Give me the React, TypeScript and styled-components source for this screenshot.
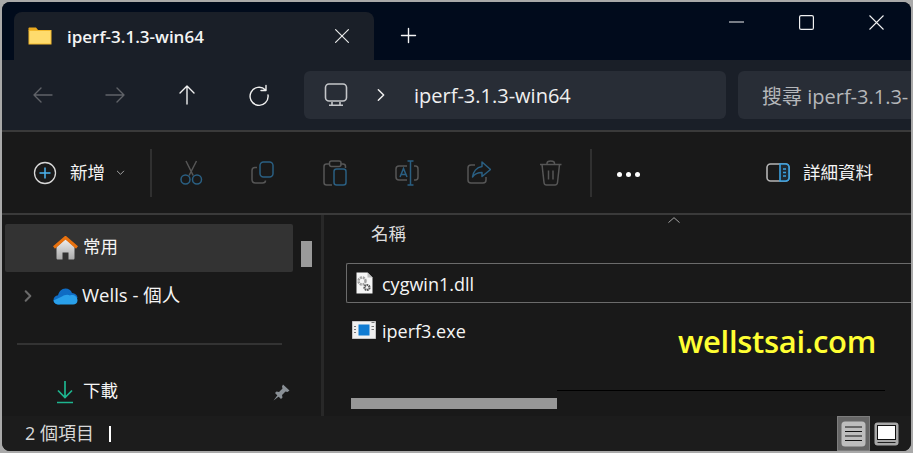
import React from "react";
import styled, { createGlobalStyle } from "styled-components";

const GlobalStyle = createGlobalStyle`
  html, body { margin: 0; padding: 0; background: #ffffff; }
  body { font-family: "Open Sans", "Noto Sans CJK TC", sans-serif; }
  * { box-sizing: border-box; }
`;

const Frame = styled.div`
  width: 913px;
  height: 453px;
  background: #a9a9a9;
  padding: 2px;
  overflow: hidden;
`;

const Win = styled.div`
  position: relative;
  width: 909px;
  height: 449px;
  border-radius: 8px;
  overflow: hidden;
  display: flex;
  flex-direction: column;
  background: #191919;
  color: #fff;
`;

const TitleBar = styled.div`
  height: 58px;
  flex: none;
  background: #010b1c;
  display: flex;
  align-items: flex-end;
  padding-left: 12px;
`;

const Tab = styled.div`
  width: 360px;
  height: 48px;
  background: #1a1f28;
  border-radius: 8px 8px 0 0;
  display: flex;
  align-items: center;
  padding: 0 0 0 14px;
  flex: none;
`;

const TabTitle = styled.span`
  margin-left: 15px;
  font-size: 17px;
  font-weight: 600;
  color: #f4f4f4;
  flex: 1;
`;

const TabClose = styled.span`
  display: flex;
  margin-right: 21px;
`;

const NewTab = styled.span`
  display: flex;
  margin: 0 0 14px 24px;
`;

const WinControls = styled.div`
  margin-left: auto;
  align-self: flex-start;
  display: flex;
  align-items: center;
  gap: 55px;
  height: 41px;
  padding: 0 27px 0 0;
`;

const NavBar = styled.div`
  height: 70px;
  flex: none;
  background: #1a1f28;
  display: flex;
  align-items: center;
  padding-left: 28px;
`;

const NavButton = styled.span<{ $off?: boolean }>`
  width: 26px;
  display: flex;
  justify-content: center;
  margin-right: 46px;
  opacity: ${(p) => (p.$off ? 0.4 : 1)};
`;

const AddressBar = styled.div`
  margin-left: -14px;
  width: 422px;
  height: 48px;
  background: #282d36;
  border-radius: 6px;
  display: flex;
  align-items: center;
  padding-left: 20px;
  flex: none;
`;

const Crumb = styled.span`
  margin-left: 25px;
  font-size: 20px;
  color: #f0f0f0;
`;

const Separator = styled.span`
  display: flex;
  margin-left: 25px;
`;

const SearchBox = styled.div`
  margin-left: 12px;
  flex: 1;
  height: 48px;
  background: #282d36;
  border-radius: 6px 0 0 6px;
  display: flex;
  align-items: center;
  padding-left: 24px;
  font-size: 20px;
  color: #b5b7ba;
  white-space: nowrap;
  overflow: hidden;
`;

const Divider = styled.div`
  height: 2px;
  flex: none;
  background: #3a3a3a;
`;

const Toolbar = styled.div`
  height: 81px;
  flex: none;
  background: #191919;
  display: flex;
  align-items: center;
  padding-left: 31px;
`;

const NewButton = styled.div`
  display: flex;
  align-items: center;
  font-size: 17.500px;
  color: #f5f5f5;
  gap: 13px;
`;

const ToolLabel = styled.span`
  padding-bottom: 2px;
`;

const NewChevron = styled.span`
  display: flex;
  margin-left: -3px;
`;

const ToolSep = styled.span<{ $left: number; $right: number }>`
  width: 2px;
  height: 48px;
  background: #303030;
  flex: none;
  margin-left: ${(p) => p.$left}px;
  margin-right: ${(p) => p.$right}px;
`;

const ToolIcon = styled.span`
  width: 24px;
  height: 26px;
  display: flex;
  align-items: center;
  justify-content: center;
  margin-right: 48px;
  flex: none;
`;

const More = styled.div`
  display: flex;
  gap: 4px;
  width: 24px;
  margin-top: 4px;
`;

const Dot = styled.span`
  width: 5px;
  height: 5px;
  border-radius: 50%;
  background: #fff;
`;

const Details = styled.div`
  margin-left: 125px;
  display: flex;
  align-items: center;
  gap: 13px;
  font-size: 17.500px;
  color: #f5f5f5;
`;

const Main = styled.div`
  flex: 1;
  min-height: 0;
  display: flex;
  background: #191919;
  position: relative;
`;

const Sidebar = styled.div`
  width: 322px;
  flex: none;
  padding: 9px 0 0 3px;
  border-right: 3px solid #282828;
  position: relative;
`;

const NavRow = styled.div<{ $selected?: boolean }>`
  width: 288px;
  height: 48px;
  display: flex;
  align-items: center;
  background: ${(p) => (p.$selected ? "#333333" : "transparent")};
  border-radius: 2px;
  font-size: 17.500px;
  color: #f5f5f5;
`;

const RowLabel = styled.span`
  padding-bottom: 6px;
`;

const WideLabel = styled(RowLabel)`
  font-size: 18.500px;
  padding-bottom: 5px;
  margin-left: -1px;
`;

const Expander = styled.span`
  width: 48px;
  padding-left: 16px;
  display: flex;
  flex: none;
`;

const RowIcon = styled.span`
  width: 29px;
  display: flex;
  flex: none;
  margin-right: 1px;
`;

const RowRule = styled.div`
  width: 265px;
  height: 2px;
  background: #333;
  margin: 23px 0 0 12px;
`;

const PinRow = styled(NavRow)`
  margin-top: 23px;
`;

const Pin = styled.span`
  margin-left: auto;
  margin-right: 3px;
  display: flex;
`;

const VScrollThumb = styled.span`
  position: absolute;
  left: 299px;
  top: 26px;
  width: 11px;
  height: 26px;
  background: #9a9a9a;
`;

const Content = styled.div`
  flex: 1;
  min-width: 0;
  padding: 0 0 0 22px;
  position: relative;
`;

const ColHeader = styled.div`
  height: 48px;
  display: flex;
  align-items: center;
  padding: 0 0 13px 25px;
  font-size: 17.500px;
  color: #dcdcdc;
`;

const SortCaret = styled.span`
  position: absolute;
  left: 343px;
  top: -2px;
  display: flex;
`;

const FileRow = styled.div<{ $focused?: boolean }>`
  height: 40px;
  display: flex;
  align-items: center;
  font-size: 18px;
  color: #f5f5f5;
  padding-left: 3px;
  border: 1px solid ${(p) => (p.$focused ? "#6b6b6b" : "transparent")};
  border-right: none;
  border-radius: 2px 0 0 2px;
  margin-bottom: 7px;
`;

const FileName = styled.span`
  padding-top: 2px;
`;

const FileIcon = styled.span`
  width: 28px;
  display: flex;
  justify-content: center;
  flex: none;
  margin-right: 4px;
`;

const HScrollThumb = styled.span`
  position: absolute;
  left: 27px;
  top: 183px;
  width: 206px;
  height: 11px;
  background: #979797;
`;

const ScrollLine = styled.span`
  position: absolute;
  left: 233px;
  top: 175px;
  width: 328px;
  height: 1px;
  background: #000;
`;

const Watermark = styled.span`
  position: absolute;
  left: 676px;
  top: 319px;
  font-family: "Open Sans", sans-serif;
  font-size: 31px;
  font-weight: 600;
  letter-spacing: -0.3px;
  color: #ffff33;
  line-height: 40px;
`;

const StatusBar = styled.div`
  height: 35px;
  flex: none;
  background: #1c1c1c;
  display: flex;
  align-items: center;
  padding-left: 23px;
  font-size: 18px;
  color: #d8d8d8;
`;

const StatusText = styled.span`
  padding-bottom: 4px;
`;

const Caret = styled.span`
  width: 2px;
  height: 16px;
  background: #fff;
  margin-left: 15px;
`;

const ViewToggle = styled.div`
  margin-left: auto;
  margin-right: 8px;
  display: flex;
  align-items: center;
  height: 100%;
`;

const ViewButton = styled.span<{ $active?: boolean }>`
  width: 33px;
  height: 35px;
  display: flex;
  align-items: center;
  justify-content: center;
  background: ${(p) => (p.$active ? "#666666" : "transparent")};
  border: ${(p) => (p.$active ? "1px solid #7d7d7d" : "none")};
`;

const BLUE = "#2a5f82";
const GREY = "#565656";

const Line = ({ d, c = "#fff", w = 1.5, s = 24 }: { d: string; c?: string; w?: number; s?: number }) => (
  <svg width={s} height={s} viewBox="0 0 24 24" fill="none" stroke={c} strokeWidth={w} strokeLinecap="round" strokeLinejoin="round">
    <path d={d} />
  </svg>
);

const FolderIcon = () => (
  <svg width="24" height="18" viewBox="0 0 24 18">
    <path d="M0.5 1.5C0.5 0.8 1 .5 1.5 .5H8l2.5 3h-10z" fill="#e9a91f" />
    <rect x="0.5" y="3" width="23" height="14.5" fill="#f3b92e" />
    <rect x="1.5" y="4" width="21" height="12.5" fill="#fedb6d" />
  </svg>
);

const MonitorIcon = () => (
  <svg width="24" height="24" viewBox="0 0 24 24" fill="none" stroke="#c4c6c9" strokeWidth="1.6">
    <rect x="1.5" y="1" width="21" height="17" rx="3.5" />
    <path d="M8 19v2.6M16 19v2.6M5 22.2h14" />
  </svg>
);

const ScissorsIcon = () => (
  <svg width="24" height="26" viewBox="0 0 24 26" fill="none" strokeWidth="1.5">
    <path d="M7 1l7.2 14.5M17.500 1l-7.400 14.500" stroke={GREY} />
    <circle cx="6.500" cy="19.500" r="4.500" stroke={BLUE} />
    <circle cx="18" cy="19.500" r="4.500" stroke={BLUE} />
  </svg>
);

const CopyIcon = () => (
  <svg width="24" height="24" viewBox="0 0 24 24" fill="none" strokeWidth="1.5">
    <path d="M6 6.500H4C2.300 6.500 1 7.800 1 9.500v9c0 2 1.500 3.500 3.500 3.500h7c1.800 0 3-1 3-2.500" stroke={GREY} />
    <rect x="9" y="1" width="13" height="15" rx="3.500" stroke={BLUE} />
  </svg>
);

const PasteIcon = () => (
  <svg width="24" height="26" viewBox="0 0 24 26" fill="none" strokeWidth="1.5">
    <path d="M7 4H3.500C2 4 1 5 1 6.500v16C1 24 2 25 3.500 25H9M17.500 4H20c1.500 0 2.500 1 2.500 2.500V8" stroke={GREY} />
    <rect x="6.500" y="1" width="11.500" height="5.500" rx="2" stroke={GREY} />
    <rect x="11" y="9" width="12" height="16" rx="2.500" stroke={BLUE} />
  </svg>
);

const RenameIcon = () => (
  <svg width="24" height="26" viewBox="0 0 24 26" fill="none" strokeWidth="1.500">
    <path d="M12 6H4C2 6 1 7.500 1 9v8c0 1.500 1 3 3 3h8M19 6h1.500c1.500 0 2.500 1.500 2.500 3v8c0 1.500-1 3-2.500 3H19" stroke={GREY} />
    <path d="M12.500 1h6M12.500 25h6M15.500 1v24" stroke={BLUE} />
    <path d="M5 17l3.500-8.500L12 17M6.200 14.500h4.600" stroke={BLUE} />
  </svg>
);

const ShareIcon = () => (
  <svg width="24" height="24" viewBox="0 0 24 24" fill="none" strokeWidth="1.500" strokeLinejoin="round">
    <path d="M8 4H4C2.300 4 1 5.300 1 7v12c0 1.700 1.300 3 3 3h12c1.700 0 3-1.300 3-3v-3" stroke={GREY} />
    <path d="M15 1l8.500 7.500-8.500 7v-4c-4 0-7 1-9.500 4.500 .5-5 4-9.800 9.500-10.500z" stroke={BLUE} />
  </svg>
);

const TrashIcon = () => (
  <svg width="24" height="26" viewBox="0 0 24 26" fill="none" stroke={GREY} strokeWidth="1.500">
    <path d="M1 4.500h21.500M3 4.500l2 18c.2 1.500 1 2.500 2.500 2.500h8.500c1.500 0 2.300-1 2.500-2.500l2-18M8 4.500V3.500C8 2 9.500 1 11.750 1s3.750 1 3.750 2.500v1M9.500 10.500v9M14 10.500v9" />
  </svg>
);

const PaneIcon = () => (
  <svg width="24" height="19" viewBox="0 0 24 19" fill="none">
    <rect x="1" y="1" width="22" height="17" rx="3.500" stroke="#b5b5b5" strokeWidth="1.600" />
    <path d="M14 1H19.500C21.500 1 23 2.500 23 4.500v10c0 2-1.500 3.500-3.500 3.500H14z" stroke="#3aa0e0" strokeWidth="1.600" fill="#1f2a33" />
    <path d="M17 6h3M17 9.500h3M17 13h3" stroke="#3aa0e0" strokeWidth="1.500" />
  </svg>
);

const HomeIcon = () => (
  <svg width="25" height="24" viewBox="0 0 25 24">
    <defs>
      <linearGradient id="homeBody" x1="0" y1="0" x2="0" y2="1">
        <stop offset="0" stopColor="#efefef" />
        <stop offset="1" stopColor="#a9a9a9" />
      </linearGradient>
    </defs>
    <path d="M3.500 11L12.500 3l9 8v11c0 1-.5 1.500-1.500 1.500h-4.500v-7h-6v7H5c-1 0-1.500-.5-1.500-1.500z" fill="url(#homeBody)" />
    <path d="M1 11.500L12.500 1.500 24 11.500" fill="none" stroke="#e8710e" strokeWidth="3" />
  </svg>
);

const CloudIcon = () => (
  <svg width="25" height="17" viewBox="0 0 25 17">
    <path d="M6 16.500C2.500 16.500 .5 14.500 .5 12c0-2.500 2-4.500 4.500-4.700C6 3.500 8.500 .5 12.500 .5c3 0 5.500 1.700 6.500 4.500 3 .2 5.500 2 5.500 5" fill="#0f6cc4" />
    <path d="M6 16.500C3 16.500 1 15 .5 12.500L9 8.500c2-1.500 5.500-2.500 8-1 3-1.500 7.500 .5 7.500 5 0 2.500-2 4-4.500 4z" fill="#29a0ea" />
  </svg>
);

const DownloadIcon = () => (
  <svg width="24" height="24" viewBox="0 0 24 24" fill="none" stroke="#1eb58f" strokeWidth="1.700">
    <path d="M12 1v16M5 10.500l7 7 7-7M4 22.500h16" />
  </svg>
);

const PinIcon = () => (
  <svg width="17" height="17" viewBox="0 0 17 17" fill="#8a9096">
    <path d="M10 0.500l6.500 6-2 1.500-2-.5L9 11l.5 2.500-1.500 1.500-6-6L3.500 7.500 6 8l3.500-3.500-.5-2z" />
    <path d="M0.500 16.500L5 10.500l1.500 1.500z" />
  </svg>
);

const DllIcon = () => (
  <svg width="17" height="22" viewBox="0 0 17 22">
    <path d="M.5 .5h11l5 5v16H.5z" fill="#f5f5f5" />
    <path d="M11.500 .5v5h5z" fill="#bdbdbd" />
    <circle cx="6" cy="9" r="3.500" fill="none" stroke="#a0a0a0" strokeWidth="2.500" strokeDasharray="2 .8" />
    <circle cx="11" cy="15.500" r="2.500" fill="none" stroke="#555" strokeWidth="2.200" strokeDasharray="1.600 .6" />
  </svg>
);

const ExeIcon = () => (
  <svg width="24" height="18" viewBox="0 0 24 18">
    <rect x="0" y="0" width="24" height="18" fill="#f0f0f0" />
    <rect x="0" y="0" width="24" height="18" fill="none" stroke="#9a9a9a" strokeWidth="1" />
    <rect x="6.500" y="3.500" width="11" height="11" fill="#0f7cd3" />
    <rect x="2" y="5" width="2" height="1" fill="#777" />
    <rect x="2" y="8" width="2" height="1" fill="#777" />
    <rect x="2" y="11" width="2" height="1" fill="#777" />
    <rect x="19.500" y="1" width="3" height="1" fill="#777" />
    <rect x="19.500" y="5" width="2.500" height="1" fill="#777" />
    <rect x="19.500" y="8" width="2.500" height="1" fill="#777" />
  </svg>
);

const ListViewIcon = () => (
  <svg width="25" height="26" viewBox="0 0 25 26">
    <rect x="0.500" y="0.500" width="24" height="25" rx="3.500" fill="#bdbdbd" />
    <path d="M4 6h17M4 10.500h17M4 15h17M4 19.500h17" stroke="#111" strokeWidth="1.200" />
  </svg>
);

const TileViewIcon = () => (
  <svg width="25" height="24" viewBox="0 0 25 24">
    <rect x="0.500" y="0.500" width="24" height="23" rx="3" fill="#a9a9a9" />
    <rect x="3.500" y="3.500" width="18" height="14" fill="#fff" stroke="#111" />
    <path d="M3.500 20.500h18" stroke="#222" />
  </svg>
);

export default function App() {
  return (
    <Frame>
      <GlobalStyle />
      <Win>
        <TitleBar>
          <Tab>
            <FolderIcon />
            <TabTitle>iperf-3.1.3-win64</TabTitle>
            <TabClose>
              <Line d="M5 5l14 14M19 5L5 19" c="#e8e8e8" w={1.3} s={22} />
            </TabClose>
          </Tab>
          <NewTab>
            <Line d="M12 4v16M4 12h16" c="#f4f4f4" w={1.6} s={21} />
          </NewTab>
          <WinControls>
            <svg width="15" height="15" viewBox="0 0 15 15" fill="none" stroke="#f0f0f0" strokeWidth="1.200">
              <path d="M0 7h15" />
            </svg>
            <svg width="15" height="15" viewBox="0 0 15 15" fill="none" stroke="#f0f0f0" strokeWidth="1.200">
              <rect x=".6" y=".6" width="13.800" height="13.800" rx="1.500" />
            </svg>
            <svg width="15" height="15" viewBox="0 0 15 15" fill="none" stroke="#f0f0f0" strokeWidth="1.100">
              <path d="M.5 .5l14 14M14.500 .5l-14 14" />
            </svg>
          </WinControls>
        </TitleBar>
        <NavBar>
          <NavButton $off>
            <Line d="M21 12H3M10 5l-7 7 7 7" c="#c8c8c8" w={1.400} />
          </NavButton>
          <NavButton $off>
            <Line d="M3 12h18M14 5l7 7-7 7" c="#c8c8c8" w={1.400} />
          </NavButton>
          <NavButton>
            <Line d="M12 21V3M5 10l7-7 7 7" c="#f0f0f0" w={1.400} />
          </NavButton>
          <NavButton>
            <Line d="M18.500 7A9 9 0 1 0 21 12M19 2.500V7.500H14" c="#f0f0f0" w={1.400} />
          </NavButton>
          <AddressBar>
            <MonitorIcon />
            <Separator>
              <Line d="M8 4l8 8-8 8" c="#f0f0f0" w={2.200} s={16} />
            </Separator>
            <Crumb>iperf-3.1.3-win64</Crumb>
          </AddressBar>
          <SearchBox>搜尋 iperf-3.1.3-</SearchBox>
        </NavBar>
        <Divider />
        <Toolbar>
          <NewButton>
            <svg width="24" height="24" viewBox="0 0 24 24" fill="none">
              <circle cx="12" cy="12" r="10.500" stroke="#d8d8d8" strokeWidth="1.300" />
              <path d="M12 6.500v11M6.500 12h11" stroke="#4cb4f0" strokeWidth="1.500" />
            </svg>
            <ToolLabel>新增</ToolLabel>
            <NewChevron>
              <Line d="M5 9l7 7 7-7" c="#c8c8c8" w={1.700} s={11} />
            </NewChevron>
          </NewButton>
          <ToolSep $left={24} $right={27} />
          <ToolIcon><ScissorsIcon /></ToolIcon>
          <ToolIcon><CopyIcon /></ToolIcon>
          <ToolIcon><PasteIcon /></ToolIcon>
          <ToolIcon><RenameIcon /></ToolIcon>
          <ToolIcon><ShareIcon /></ToolIcon>
          <ToolIcon><TrashIcon /></ToolIcon>
          <ToolSep $left={-21} $right={25} />
          <More>
            <Dot />
            <Dot />
            <Dot />
          </More>
          <Details>
            <PaneIcon />
            <ToolLabel>詳細資料</ToolLabel>
          </Details>
        </Toolbar>
        <Divider />
        <Main>
          <Sidebar>
            <NavRow $selected>
              <Expander />
              <RowIcon><HomeIcon /></RowIcon>
              <RowLabel>常用</RowLabel>
            </NavRow>
            <NavRow>
              <Expander>
                <Line d="M8 4l8 8-8 8" c="#6a6a6a" w={3.500} s={14} />
              </Expander>
              <RowIcon><CloudIcon /></RowIcon>
              <WideLabel>Wells - 個人</WideLabel>
            </NavRow>
            <RowRule />
            <PinRow>
              <Expander />
              <RowIcon>
                <DownloadIcon />
              </RowIcon>
              <RowLabel>下載</RowLabel>
              <Pin><PinIcon /></Pin>
            </PinRow>
            <VScrollThumb />
          </Sidebar>
          <Content>
            <SortCaret>
              <Line d="M3 16L12 8l9 8" c="#b8b8b8" w={1.500} s={14} />
            </SortCaret>
            <ColHeader>名稱</ColHeader>
            <FileRow $focused>
              <FileIcon><DllIcon /></FileIcon>
              <FileName>cygwin1.dll</FileName>
            </FileRow>
            <FileRow>
              <FileIcon><ExeIcon /></FileIcon>
              <FileName>iperf3.exe</FileName>
            </FileRow>
            <ScrollLine />
            <HScrollThumb />
          </Content>
        </Main>
        <StatusBar>
          <StatusText>2 個項目</StatusText>
          <Caret />
          <ViewToggle>
            <ViewButton $active><ListViewIcon /></ViewButton>
            <ViewButton><TileViewIcon /></ViewButton>
          </ViewToggle>
        </StatusBar>
        <Watermark>wellstsai.com</Watermark>
      </Win>
    </Frame>
  );
}
